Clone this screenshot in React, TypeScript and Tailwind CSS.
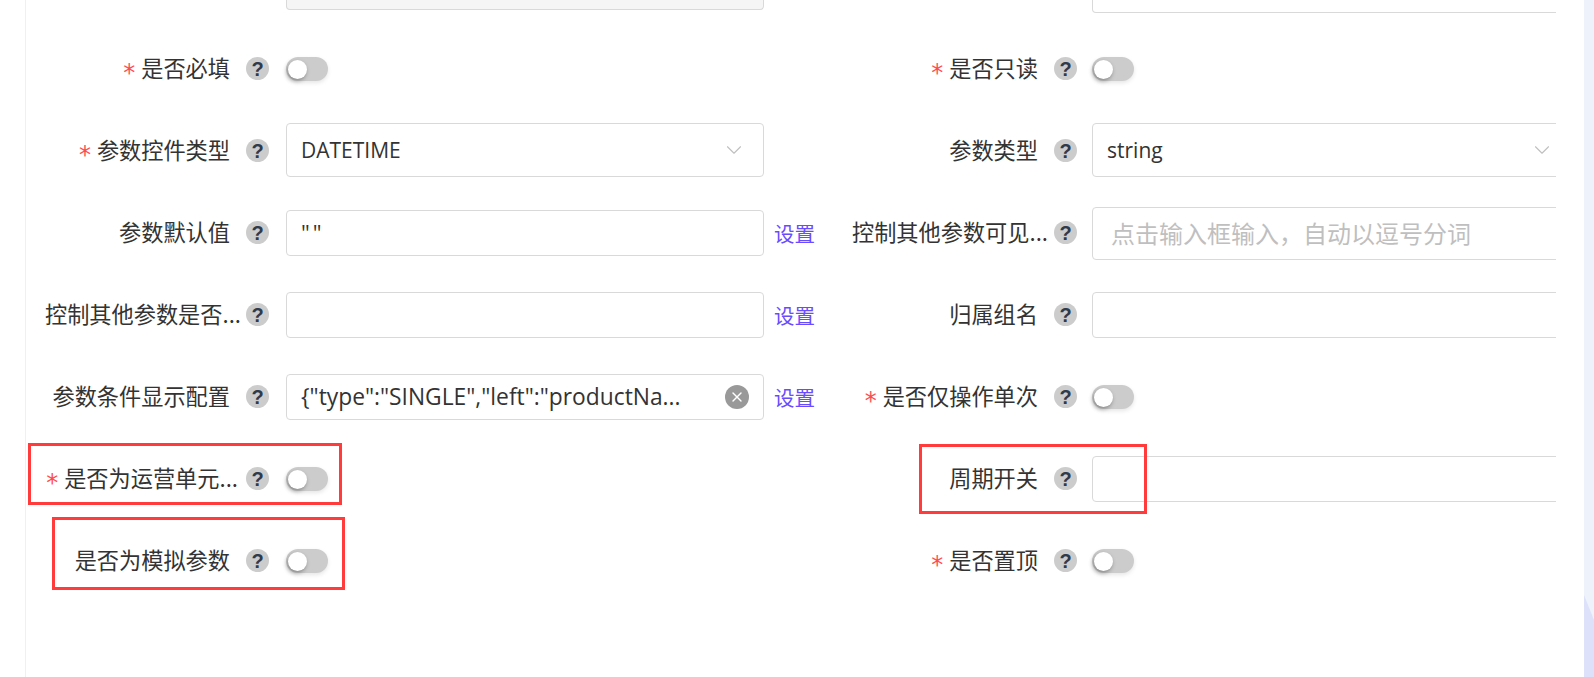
import { ReactNode } from "react";
import { ChevronDown, X } from "lucide-react";

const cn = "font-['Noto_Sans_CJK_SC','Noto_Sans',sans-serif]";
const latin = "font-['Open_Sans','Noto_Sans_CJK_SC',sans-serif]";

const Help = () => (
  <span className="flex h-[23px] w-[23px] shrink-0 items-center justify-center rounded-full bg-[#cccccc] font-['Liberation_Sans',sans-serif] text-[20px] font-bold text-[#2f3a4a]">
    ?
  </span>
);

const Toggle = () => (
  <span className="relative block h-[24px] w-[42px] rounded-full bg-[#cccccc] shadow-[0_2px_4px_rgba(0,0,0,0.1)]">
    <span className="absolute left-[2px] top-[3px] h-[19px] w-[19px] rounded-full bg-white shadow-[-1px_2px_4px_rgba(0,0,0,0.35)]" />
  </span>
);

interface IField {
  label: string;
  required?: boolean;
  cut?: boolean;
  right?: boolean;
  children?: ReactNode;
}

const Field = ({ label, required, cut, right, children }: IField) => (
  <div className="flex h-[82px] items-center">
    <div className={`flex shrink-0 items-center justify-end ${right ? "w-[257px]" : "w-[243px]"}`}>
      <div className="flex -translate-y-[1px] items-center whitespace-nowrap text-[22.2px] text-[#333333]">
        {required && (
          <span className="mr-[6px] w-[12px] shrink-0 translate-y-[5px] font-['DejaVu_Sans',sans-serif] text-[24px] leading-none text-[#ff4d4f]">
            *
          </span>
        )}
        <span>{label}</span>
      </div>
      <span className={cut ? (required ? "ml-[8px]" : right ? "ml-[6px]" : "ml-[5px]") : "ml-[16px]"}>
        <Help />
      </span>
    </div>
    <div className={`flex min-w-0 flex-1 items-center ${right ? "ml-[15px]" : "ml-[17px]"}`}>{children}</div>
  </div>
);

const Box = ({ h, children }: { h: string; children?: ReactNode }) => (
  <div className={`flex w-full items-center rounded-[4px] border border-[#d9d9d9] bg-white px-[14px] text-[21px] text-[#333333] ${h}`}>
    {children}
  </div>
);

const LeftBox = ({ h, children }: { h: string; children?: ReactNode }) => (
  <div className="flex w-full items-center">
    <div className="w-[478px] shrink-0">
      <Box h={h}>{children}</Box>
    </div>
    <a className="ml-[10px] shrink-0 text-[20.5px] text-[#6a4cff]">设置</a>
  </div>
);

const RedBox = ({ className }: { className: string }) => (
  <div className={`pointer-events-none absolute border-[3px] border-[#ff3b3b] ${className}`} />
);

export default function App() {
  return (
    <div className={`${cn} relative h-[677px] w-[1594px] overflow-hidden bg-white`}>
      <div className="flex h-full">
        <div className="w-[26px] shrink-0 border-r border-[#f0f0f0]" />
        <div className="w-[1530px] shrink-0 overflow-hidden">
          <div className="grid grid-cols-[794px_1fr]">
            <div className="h-[28px]">
              <div className="ml-[260px] h-[10px] w-[478px] rounded-b-[4px] border border-t-0 border-[#d9d9d9] bg-[#f5f5f5]" />
            </div>
            <div className="h-[28px]">
              <div className="ml-[272px] h-[13px] w-[600px] rounded-b-[4px] border border-t-0 border-[#d9d9d9]" />
            </div>

            <Field label="是否必填" required><Toggle /></Field>
            <Field label="是否只读" required right><Toggle /></Field>

            <Field label="参数控件类型" required>
              <div className="mb-[2px] w-[478px]">
                <Box h="h-[54px]">
                  <span className={`${latin} flex-1 translate-y-[1px]`}>DATETIME</span>
                  <ChevronDown size={26} strokeWidth={1} className="mr-[2px] text-[#bfbfbf]" />
                </Box>
              </div>
            </Field>
            <Field label="参数类型" right>
              <div className="mb-[2px] w-[600px] shrink-0">
                <Box h="h-[54px]">
                  <span className={`${latin} flex w-[448px] shrink-0 translate-y-[1px] items-center justify-between`}>
                    string
                    <ChevronDown size={26} strokeWidth={1} className="-translate-y-[1px] text-[#bfbfbf]" />
                  </span>
                </Box>
              </div>
            </Field>

            <Field label="参数默认值">
              <LeftBox h="h-[46px]">
                <span className={`${latin} -translate-y-[1px] text-[22px] tracking-[3px]`}>""</span>
              </LeftBox>
            </Field>
            <Field label="控制其他参数可见..." cut right>
              <div className="w-[600px] shrink-0">
                <Box h="h-[53px]">
                  <span className="pl-[4px] text-[24px] text-[#bfbfbf]">点击输入框输入，自动以逗号分词</span>
                </Box>
              </div>
            </Field>

            <Field label="控制其他参数是否..." cut>
              <LeftBox h="h-[46px]" />
            </Field>
            <Field label="归属组名" right>
              <div className="w-[600px] shrink-0"><Box h="h-[46px]" /></div>
            </Field>

            <Field label="参数条件显示配置">
              <LeftBox h="h-[46px]">
                <span className={`${latin} flex-1 truncate text-[22.8px]`}>{'{"type":"SINGLE","left":"productNa...'}</span>
                <span className="ml-[10px] flex h-[24px] w-[24px] shrink-0 items-center justify-center rounded-full bg-[#999999] text-white">
                  <X size={16} strokeWidth={2} />
                </span>
              </LeftBox>
            </Field>
            <Field label="是否仅操作单次" required right><Toggle /></Field>

            <Field label="是否为运营单元..." required cut><Toggle /></Field>
            <Field label="周期开关" right>
              <div className="w-[600px] shrink-0"><Box h="h-[46px]" /></div>
            </Field>

            <Field label="是否为模拟参数"><Toggle /></Field>
            <Field label="是否置顶" required right><Toggle /></Field>
          </div>
        </div>
        <div className="w-[28px] shrink-0" />
        <div className="relative flex-1 bg-[#eef2fb]">
          <svg className="absolute bottom-0 left-0" width="10" height="82" viewBox="0 0 10 82">
            <path d="M0 0 L10 25 L10 82 L0 82 Z" fill="#dde1fa" />
          </svg>
        </div>
      </div>

      <RedBox className="left-[28px] top-[443px] h-[62px] w-[314px]" />
      <RedBox className="left-[52px] top-[517px] h-[73px] w-[293px]" />
      <RedBox className="left-[919px] top-[444px] h-[70px] w-[228px]" />
    </div>
  );
}
